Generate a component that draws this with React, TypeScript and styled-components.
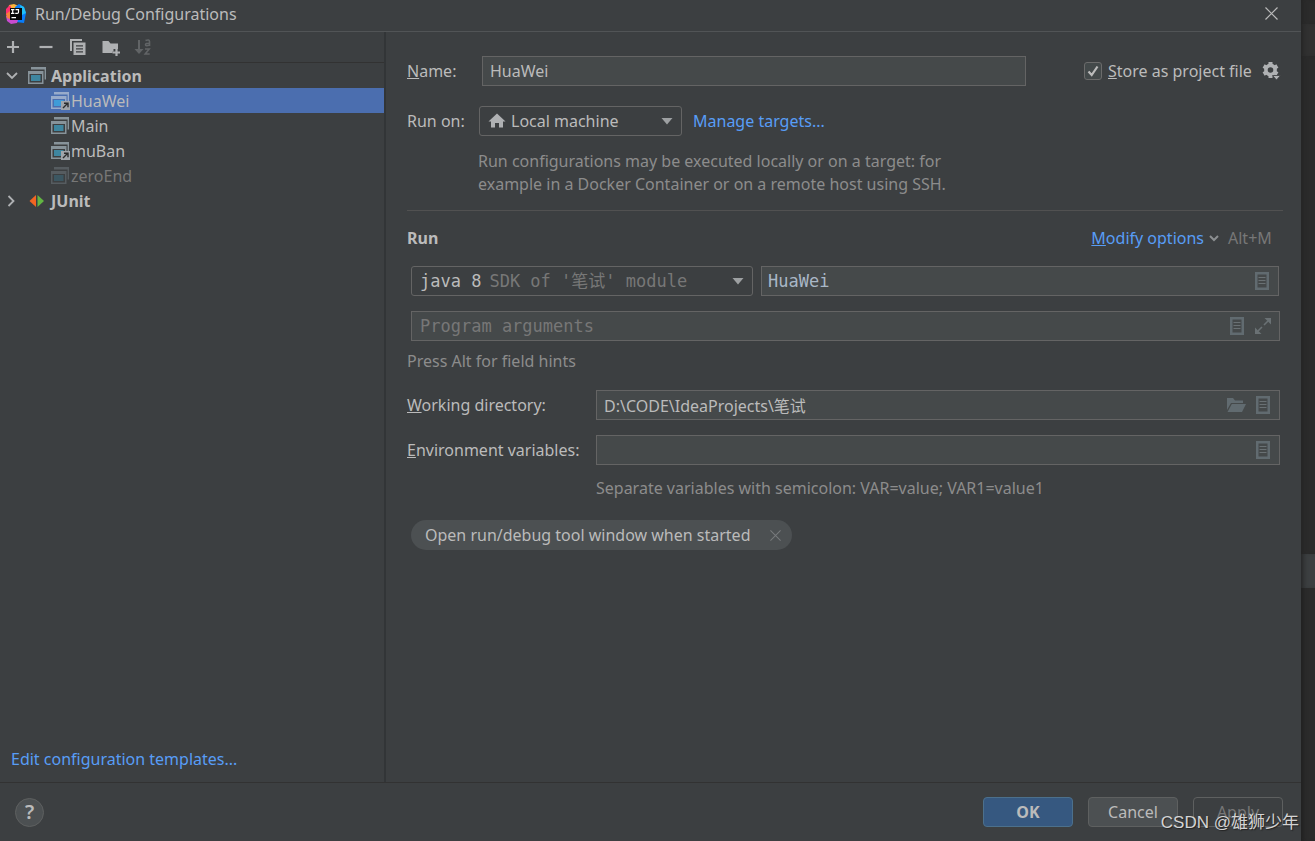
import React, { useState } from "react";
import styled, { createGlobalStyle, css } from "styled-components";

const ui = `"Noto Sans", "Open Sans", "Noto Sans CJK SC", sans-serif`;
const mono = `"DejaVu Sans Mono", "Noto Sans CJK SC", monospace`;

const GlobalStyle = createGlobalStyle`
  *, *::before, *::after { box-sizing: border-box; }
  body { margin: 0; background: #2b2b2b; color: #bbbbbb; font: 16px/24px ${ui}; }
  button, input, select { font: inherit; color: inherit; margin: 0; }
  svg { display: block; flex: none; }
`;

const Screen = styled.div`
  position: relative;
  display: flex;
  min-height: 100vh;
`;
const Dialog = styled.main`
  flex: 1;
  min-width: 0;
  display: flex;
  flex-direction: column;
  background: #3c3f41;
`;
const EditorEdge = styled.div`
  width: 14px;
  display: flex;
  flex-direction: column;
  background: #2b2b2b;
  box-shadow: inset 5px 0 5px -3px #1f1f1f;
`;
const EdgeBlock = styled.div<{ $h: number; $bg: string }>`
  height: ${(p) => p.$h}px;
  background: ${(p) => p.$bg};
  box-shadow: inset 5px 0 5px -3px #242424;
`;
const TitleBar = styled.header`
  height: 32px;
  padding: 0 23px 4px 6px;
  display: flex;
  align-items: center;
  gap: 9px;
  border-bottom: 1px solid #515456;
`;
const Title = styled.h1`
  flex: 1;
  margin: 0;
  font-size: 16px;
  font-weight: 400;
`;
const IconButton = styled.button`
  display: flex;
  align-items: center;
  justify-content: center;
  padding: 0;
  border: 0;
  background: none;
`;
const Body = styled.div`
  flex: 1;
  display: flex;
`;
const Sidebar = styled.nav`
  width: 386px;
  flex: none;
  display: flex;
  flex-direction: column;
  border-right: 2px solid #323537;
`;
const Toolbar = styled.div`
  height: 31px;
  display: flex;
  align-items: center;
  gap: 14px;
  padding-left: 4px;
  border-bottom: 1px solid #323232;
`;
const Tree = styled.ul`
  flex: 1;
  list-style: none;
  margin: 0;
  padding: 0;
`;
const TreeRow = styled.li<{ $child?: boolean; $selected?: boolean; $dim?: boolean; $bold?: boolean }>`
  height: 25px;
  display: flex;
  align-items: center;
  gap: ${(p) => (p.$child ? 1 : 4)}px;
  padding-left: ${(p) => (p.$child ? 51 : 4)}px;
  background: ${(p) => (p.$selected ? "#4b6eaf" : "transparent")};
  color: ${(p) => (p.$dim ? "#777777" : "#bbbbbb")};
  font-weight: ${(p) => (p.$bold ? 700 : 400)};
`;
const Toggle = styled(IconButton)`
  width: 16px;
  height: 16px;
  margin-right: 4px;
`;
const Link = styled.a`
  color: #589df6;
  text-decoration: none;
`;
const SidebarFooter = styled.div`
  padding: 12px 11px 11px;
`;
const Form = styled.form`
  flex: 1;
  min-width: 0;
  padding: 24px 18px 24px 21px;
  display: flex;
  flex-direction: column;
`;
const Row = styled.div<{ $top?: number; $left?: number; $right?: number; $gap?: number }>`
  display: flex;
  align-items: center;
  gap: ${(p) => p.$gap ?? 0}px;
  margin-top: ${(p) => p.$top ?? 0}px;
  padding: 0 ${(p) => p.$right ?? 0}px 0 ${(p) => p.$left ?? 0}px;
`;
const Label = styled.label<{ $w: number }>`
  width: ${(p) => p.$w}px;
  flex: none;
`;
const boxed = css`
  height: 30px;
  display: flex;
  align-items: center;
  border: 1px solid #646464;
`;
const Field = styled.div<{ $mono?: boolean }>`
  ${boxed}
  flex: 1;
  min-width: 0;
  gap: 8px;
  padding-right: 7px;
  background: #45494a;
  ${(p) => p.$mono && css`font-family: ${mono}; font-size: 17px;`}
`;
const TextInput = styled.input<{ $blue?: boolean; $pad?: number }>`
  flex: 1;
  min-width: 0;
  height: 28px;
  padding: 0 0 0 ${(p) => p.$pad ?? 7}px;
  border: 0;
  outline: 0;
  background: none;
  color: ${(p) => (p.$blue ? "#a9b7c6" : "#bbbbbb")};
  &::placeholder { color: #777777; opacity: 1; }
`;
const NameCell = styled.div`
  flex: 1;
  max-width: 544px;
  display: flex;
`;
const StoreOption = styled.div`
  margin-left: auto;
  padding-right: 2px;
  display: flex;
  align-items: center;
  gap: 6px;
`;
const CheckLabel = styled.label`
  min-width: 172px;
  display: flex;
  align-items: center;
  gap: 6px;
`;
const Check = styled.input`
  appearance: none;
  width: 18px;
  height: 18px;
  border: 1px solid #6b6b6b;
  border-radius: 3px;
  background: #43494a;
  &:checked {
    background: #43494a url("data:image/svg+xml,%3Csvg xmlns='http://www.w3.org/2000/svg' viewBox='0 0 16 16'%3E%3Cpath d='M3.5 8.5 6.7 12 12.5 3.5' fill='none' stroke='%23bbbbbb' stroke-width='2.2'/%3E%3C/svg%3E") center / 16px 16px;
  }
`;
const Combo = styled.div<{ $w: number; $mono?: boolean }>`
  ${boxed}
  width: ${(p) => p.$w}px;
  flex: none;
  padding: 0 8px;
  gap: 5px;
  border-radius: 3px;
  ${(p) => p.$mono && css`gap: 8px; font-family: ${mono}; font-size: 17px;`}
`;
const Select = styled.select<{ $dim?: boolean }>`
  appearance: none;
  flex: 1;
  min-width: 0;
  height: 28px;
  padding: 0;
  border: 0;
  outline: 0;
  background: transparent;
  color: ${(p) => (p.$dim ? "#777777" : "#bbbbbb")};
`;
const Help = styled.p<{ $left: number; $top: number }>`
  margin: ${(p) => p.$top}px 0 0 ${(p) => p.$left}px;
  max-width: 500px;
  line-height: 23px;
  color: #8c8c8c;
`;
const Divider = styled.hr`
  width: 100%;
  height: 1px;
  margin: 14px 0 0;
  border: 0;
  background: #515151;
`;
const Heading = styled.h2`
  flex: 1;
  margin: 0;
  font-size: 16px;
  font-weight: 700;
`;
const Modify = styled.div`
  display: flex;
  align-items: center;
  gap: 4px;
  padding-right: 6px;
`;
const Shortcut = styled.span`
  min-width: 49px;
  margin-left: 4px;
  color: #777777;
`;
const Chip = styled.div`
  height: 30px;
  min-width: 381px;
  display: flex;
  align-items: center;
  justify-content: space-between;
  gap: 10px;
  padding: 0 11px 0 14px;
  border-radius: 15px;
  background: #4c5052;
`;
const Footer = styled.footer`
  height: 59px;
  display: flex;
  align-items: center;
  gap: 15px;
  padding: 0 18px 0 15px;
  border-top: 1px solid #323232;
`;
const HelpButton = styled.button`
  width: 29px;
  height: 29px;
  margin-right: auto;
  padding: 0;
  border: 1px solid #5e6060;
  border-radius: 50%;
  background: #4c5052;
  font-size: 20px;
  font-weight: 600;
  line-height: 26px;
`;
const Button = styled.button<{ $primary?: boolean }>`
  width: 90px;
  height: 30px;
  padding: 0;
  border: 1px solid ${(p) => (p.$primary ? "#4c708c" : "#5e6060")};
  border-radius: 4px;
  background: ${(p) => (p.$primary ? "#365880" : "#4c5052")};
  font-weight: ${(p) => (p.$primary ? 700 : 400)};
  &:disabled { background: #3c3f41; color: #777777; }
`;
const Watermark = styled.div`
  position: absolute;
  right: 16px;
  bottom: 6px;
  font: 17px/24px "Liberation Sans", "Noto Sans CJK SC", sans-serif;
  color: #d4d4d4;
  text-shadow: 1px 1px 1px #222222;
`;

const Logo = () => (
  <svg width="20" height="20" viewBox="0 0 20 20">
    <path d="M3 1 8 0l7 3-5 4H2z" fill="#fdb43c" />
    <path d="M0 5 4 1l3 7-3 5-4-3z" fill="#fe2f70" />
    <path d="M9 3 13 0l5 3 2 6-2 10-8-1z" fill="#087cfa" />
    <path d="m14 1 4 2 2 6-4 2z" fill="#20c0f6" />
    <path d="m0 12 4-2 8 6-1 3-6 1-4-3z" fill="#c94bd0" />
    <path d="m0 10 4-3v8l-3-1z" fill="#f5803c" />
    <path fill="#070707" d="M4 4h12v12H4z" />
    <path d="M5 5.600h3.400M6.700 5.600v4M5 9.400h3.400M9.500 5.600h3v2.600q0 1.200-1.300 1.200H9.200M5.500 13.600H10" fill="none" stroke="#fff" strokeWidth="1.200" />
  </svg>
);
const Close = ({ size = 13, color = "#bbbbbb" }: { size?: number; color?: string }) => (
  <svg width={size} height={size} viewBox="0 0 13 13">
    <path d="m.5.5 12 12m0-12-12 12" stroke={color} strokeWidth="1.200" />
  </svg>
);
const Plus = () => (
  <svg width="18" height="18" viewBox="0 0 18 18"><path d="M9 3v12M3 9h12" stroke="#afb1b3" strokeWidth="2.200" /></svg>
);
const Minus = () => (
  <svg width="18" height="18" viewBox="0 0 18 18"><path d="M3.500 9h13" stroke="#afb1b3" strokeWidth="2.200" /></svg>
);
const Copy = () => (
  <svg width="18" height="18" viewBox="0 0 18 18">
    <path d="M3 13V2h11" fill="none" stroke="#afb1b3" strokeWidth="2" />
    <path fillRule="evenodd" fill="#afb1b3" d="M5.500 4.500h12v12.500h-12zM8 7.200v1.300h7V7.200zm0 3v1.300h7v-1.300zm0 3v1.300h7v-1.300z" />
  </svg>
);
const FolderPlus = () => (
  <svg width="20" height="18" viewBox="-1 0 20 18">
    <path fill="#afb1b3" d="M1.500 3h6l2 2.500H17V11h-4.500v2.500h-1V15h-10z" />
    <path d="M15.500 10.500v8M11.500 14.500h7.500" stroke="#afb1b3" strokeWidth="2.200" />
  </svg>
);
const Sort = () => (
  <svg width="18" height="18" viewBox="0 0 18 18" fill="none" stroke="#616466">
    <path d="M5 2v10" strokeWidth="2" />
    <path d="M.5 11h9L5 16z" fill="#616466" stroke="none" />
    <path d="M11.500 2.500q4-1.500 4 1V8m0-2.800q-4-.2-4 1.500 0 1.800 4 .3M11 11h4.200l-4 5h4.500" strokeWidth="1.600" />
  </svg>
);
const Chevron = ({ right, color = "#afb1b3", size = 16 }: { right?: boolean; color?: string; size?: number }) => (
  <svg width={size} height={size} viewBox="0 0 16 16" fill="none" stroke={color} strokeWidth="1.800">
    <path d={right ? "m4.500 3 5 5-5 5" : "m3 5 5 5 5-5"} />
  </svg>
);
const SmallChevron = () => (
  <svg width="12" height="12" viewBox="0 0 12 12" fill="none" stroke="#8c8f91" strokeWidth="2">
    <path d="m2 4 4 4 4-4" />
  </svg>
);
const AppIcon = ({ shared, selected, dim }: { shared?: boolean; selected?: boolean; dim?: boolean }) => {
  const frame = selected ? "#98abcb" : "#87939a";
  return (
    <svg width="19" height="18" viewBox="0 0 19 18" opacity={dim ? 0.35 : 1}>
      <path d="M3 0h15v12.500h-1.400V2.500H3z" fill={frame} />
      <path fillRule="evenodd" fill={frame} d="M0 4h15.500v13H0zM1.500 7v8.500H14V7z" />
      <path fill={selected ? "#3f9cd8" : "#3e86a0"} d="M3 8h9.500v6H3z" />
      {shared && (
        <>
          <path fill="#9fa5ab" d="M10 9h9v9h-9z" />
          <path d="M12 16l4.500-4.500M13 11.200h4v4" stroke="#2b2d2e" strokeWidth="1.400" fill="none" />
        </>
      )}
    </svg>
  );
};
const JUnit = () => (
  <svg width="19" height="18" viewBox="0 0 19 18">
    <path fill="#f26522" d="M8 3v12L1.500 9z" />
    <path fill="#62b543" d="M9.500 3v12l6.500-6z" />
  </svg>
);
const Home = () => (
  <svg width="18" height="18" viewBox="0 0 18 18">
    <path fill="#afb1b3" d="m9 1.500 8.500 8H15v6h-4V11H7v4.500H3v-6H.5z" />
  </svg>
);
const Arrow = () => (
  <svg width="12" height="8" viewBox="0 0 12 8"><path fill="#9da0a2" d="M.5 1h11L6 7.500z" /></svg>
);
const Doc = () => (
  <svg width="18" height="18" viewBox="0 0 18 18">
    <path d="M2 0h14v18H2z M4.500 2.500v13h9v-13z" fillRule="evenodd" fill="#616b70" />
    <path d="M5.500 5.500h7m-7 3h7m-7 3h7" stroke="#6a7174" strokeWidth="1.200" />
  </svg>
);
const Expand = () => (
  <svg width="18" height="18" viewBox="0 0 18 18">
    <path fill="#6a7174" d="M10.500 1H17v6.500zM1 10.500V17h6.500z" />
    <path d="m10 8 4-4M4 14l4-4" stroke="#6a7174" strokeWidth="1.600" />
  </svg>
);
const FolderOpen = () => (
  <svg width="20" height="18" viewBox="0 0 20 18" fill="#616b70">
    <path d="M1 2h6l2 2.500h8V7H5L1 14z" />
    <path d="M5.800 8H20l-4 8H1.500z" />
  </svg>
);
const Gear = () => (
  <svg width="19" height="20" viewBox="0 0 19 20">
    <circle cx="8.500" cy="9" r="4.600" fill="none" stroke="#afb1b3" strokeWidth="3.600" />
    <path d="M8.500 1v3m0 10v3M1.600 5l2.600 1.500m8.600 5 2.600 1.500M1.600 13l2.600-1.500m8.600-5L15.400 5" stroke="#afb1b3" strokeWidth="4" />
    <path d="M10.500 14.500h8l-4 4.500z" fill="#afb1b3" stroke="#3c3f41" strokeWidth=".8" />
  </svg>
);

const configs = [
  { name: "HuaWei", shared: true },
  { name: "Main" },
  { name: "muBan", shared: true },
  { name: "zeroEnd", dim: true },
];

export default function App() {
  const [selected, setSelected] = useState("HuaWei");
  return (
    <Screen>
      <GlobalStyle />
      <Dialog>
        <TitleBar>
          <Logo />
          <Title>Run/Debug Configurations</Title>
          <IconButton aria-label="Close"><Close /></IconButton>
        </TitleBar>
        <Body>
          <Sidebar>
            <Toolbar>
              <IconButton aria-label="Add"><Plus /></IconButton>
              <IconButton aria-label="Remove"><Minus /></IconButton>
              <IconButton aria-label="Copy"><Copy /></IconButton>
              <IconButton aria-label="New folder"><FolderPlus /></IconButton>
              <IconButton aria-label="Sort" disabled><Sort /></IconButton>
            </Toolbar>
            <Tree>
              <TreeRow $bold>
                <Toggle aria-label="Collapse Application"><Chevron /></Toggle>
                <AppIcon />
                Application
              </TreeRow>
              {configs.map((c) => (
                <TreeRow key={c.name} $child $selected={selected === c.name} $dim={c.dim} onClick={() => setSelected(c.name)}>
                  <AppIcon shared={c.shared} selected={selected === c.name} dim={c.dim} />
                  {c.name}
                </TreeRow>
              ))}
              <TreeRow $bold>
                <Toggle aria-label="Expand JUnit"><Chevron right /></Toggle>
                <JUnit />
                JUnit
              </TreeRow>
            </Tree>
            <SidebarFooter>
              <Link href="#templates">Edit configuration templates...</Link>
            </SidebarFooter>
          </Sidebar>
          <Form onSubmit={(e) => e.preventDefault()}>
            <Row>
              <Label $w={75} htmlFor="name"><u>N</u>ame:</Label>
              <NameCell>
                <Field><TextInput id="name" defaultValue="HuaWei" /></Field>
              </NameCell>
              <StoreOption>
                <CheckLabel>
                  <Check type="checkbox" defaultChecked />
                  <span><u>S</u>tore as project file</span>
                </CheckLabel>
                <IconButton type="button" aria-label="Storage settings"><Gear /></IconButton>
              </StoreOption>
            </Row>
            <Row $top={20}>
              <Label $w={72} htmlFor="target">Run on:</Label>
              <Row $gap={11}>
                <Combo $w={203}>
                  <Home />
                  <Select id="target"><option>Local machine</option></Select>
                  <Arrow />
                </Combo>
                <Link href="#targets">Manage targets...</Link>
              </Row>
            </Row>
            <Help $top={14} $left={71}>
              Run configurations may be executed locally or on a target: for
              example in a Docker Container or on a remote host using SSH.
            </Help>
            <Divider />
            <Row $top={15}>
              <Heading>Run</Heading>
              <Modify>
                <Link href="#modify"><u>M</u>odify options</Link>
                <SmallChevron />
                <Shortcut>Alt+M</Shortcut>
              </Modify>
            </Row>
            <Row $top={16} $left={4} $right={4} $gap={8}>
              <Combo $w={342} $mono>
                <label htmlFor="jre">java 8</label>
                <Select id="jre" $dim><option>SDK of '笔试' module</option></Select>
                <Arrow />
              </Combo>
              <Field $mono>
                <TextInput aria-label="Main class" $blue $pad={6} defaultValue="HuaWei" />
                <IconButton type="button" aria-label="Choose main class"><Doc /></IconButton>
              </Field>
            </Row>
            <Row $top={15} $left={4} $right={3}>
              <Field $mono>
                <TextInput aria-label="Program arguments" $pad={8} placeholder="Program arguments" />
                <IconButton type="button" aria-label="Insert macro"><Doc /></IconButton>
                <IconButton type="button" aria-label="Expand"><Expand /></IconButton>
              </Field>
            </Row>
            <Help $top={9} $left={0}>Press Alt for field hints</Help>
            <Row $top={17} $right={3}>
              <Label $w={189} htmlFor="dir"><u>W</u>orking directory:</Label>
              <Field>
                <TextInput id="dir" defaultValue="D:\CODE\IdeaProjects\笔试" />
                <IconButton type="button" aria-label="Browse"><FolderOpen /></IconButton>
                <IconButton type="button" aria-label="Insert macro"><Doc /></IconButton>
              </Field>
            </Row>
            <Row $top={15} $right={3}>
              <Label $w={189} htmlFor="env"><u>E</u>nvironment variables:</Label>
              <Field>
                <TextInput id="env" />
                <IconButton type="button" aria-label="Edit variables"><Doc /></IconButton>
              </Field>
            </Row>
            <Help $top={12} $left={189}>Separate variables with semicolon: VAR=value; VAR1=value1</Help>
            <Row $top={20} $left={4}>
              <Chip>
                Open run/debug tool window when started
                <IconButton type="button" aria-label="Remove option"><Close size={11} color="#777a7c" /></IconButton>
              </Chip>
            </Row>
          </Form>
        </Body>
        <Footer>
          <HelpButton aria-label="Help">?</HelpButton>
          <Button $primary>OK</Button>
          <Button>Cancel</Button>
          <Button disabled>Apply</Button>
        </Footer>
      </Dialog>
      <EditorEdge>
        <EdgeBlock $h={24} $bg="#2b2b2b" />
        <EdgeBlock $h={32} $bg="#313131" />
        <EdgeBlock $h={498} $bg="#2b2b2b" />
        <EdgeBlock $h={34} $bg="#3c3f41" />
      </EditorEdge>
      <Watermark>CSDN @雄狮少年</Watermark>
    </Screen>
  );
}
